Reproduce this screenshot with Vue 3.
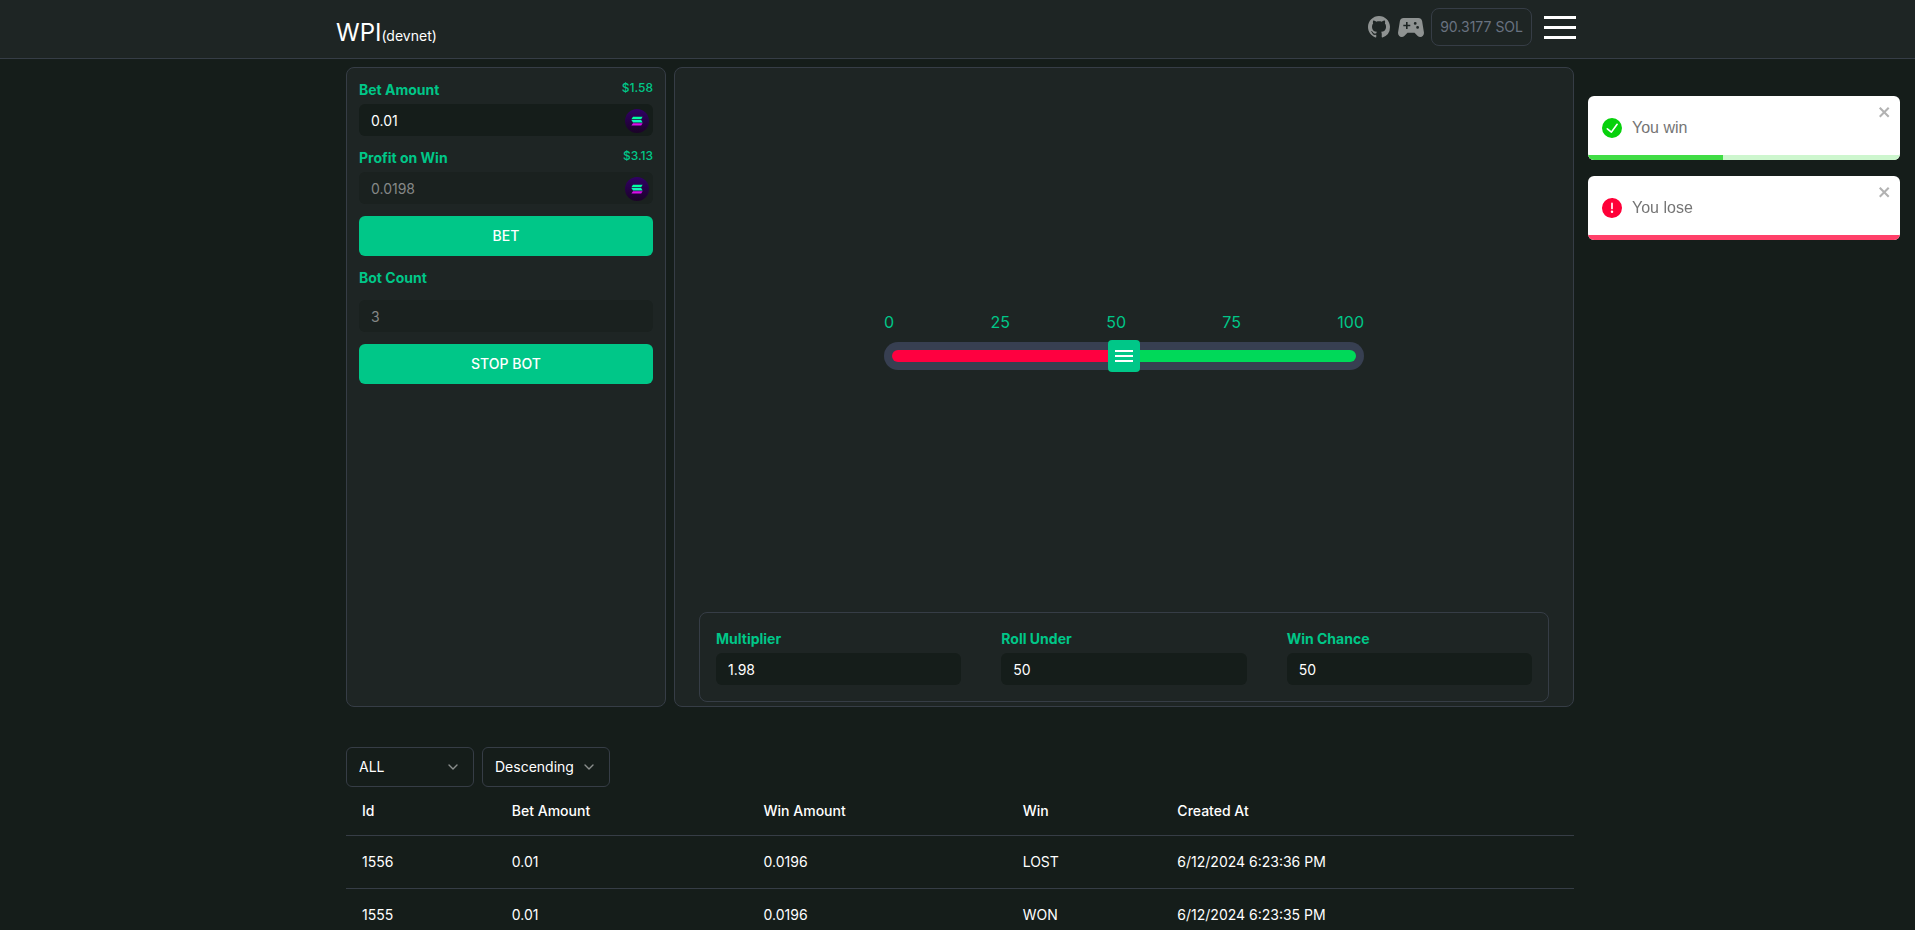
<script setup>
import { ref } from 'vue'

const bet = ref('0.01')
const profit = ref('0.0198')
const bots = ref('3')
const roll = ref(50)
const stats = ref([
  { id: 'multiplier', label: 'Multiplier', value: '1.98' },
  { id: 'roll-under', label: 'Roll Under', value: '50' },
  { id: 'win-chance', label: 'Win Chance', value: '50' },
])
const filter = ref('ALL')
const order = ref('Descending')
const ticks = [0, 25, 50, 75, 100]
const rows = [
  { id: 1556, bet: '0.01', win: '0.0196', result: 'LOST', at: '6/12/2024 6:23:36 PM' },
  { id: 1555, bet: '0.01', win: '0.0196', result: 'WON', at: '6/12/2024 6:23:35 PM' },
]
const toasts = ref([
  { kind: 'success', text: 'You win', progress: 43.3 },
  { kind: 'error', text: 'You lose', progress: 100 },
])
function dismiss(t) {
  toasts.value = toasts.value.filter((x) => x !== t)
}
</script>

<template>
  <div class="page">
    <svg class="defs" aria-hidden="true">
      <defs>
        <linearGradient id="coin-bg" x1="0" y1="0" x2="0" y2="1">
          <stop offset="0" stop-color="#310065" />
          <stop offset="1" stop-color="#1b0327" />
        </linearGradient>
        <symbol id="coin" viewBox="0 0 24 24">
          <circle cx="12" cy="12" r="12" fill="url(#coin-bg)" />
          <path d="M8 7.8h9.600l-1.400 2.400H6.400z" fill="#00ffa3" />
          <path d="M6.400 11h9.800l1.400 2.400H8z" fill="#0ff5b5" />
          <path d="M8 14.200h9.600l-1.400 2.400H6.400z" fill="#d80fe8" />
        </symbol>
      </defs>
    </svg>

    <header class="topbar">
      <div class="topbar-inner">
        <a class="brand" href="#"><span class="brand-name">WPI</span><span class="brand-net">(devnet)</span></a>
        <nav class="actions">
          <a class="icon-link" href="#" aria-label="GitHub">
            <svg class="github" viewBox="0 0 16 16" aria-hidden="true">
              <path fill="currentColor" d="M8 0C3.58 0 0 3.58 0 8c0 3.54 2.29 6.53 5.47 7.59.4.07.55-.17.55-.38 0-.19-.01-.82-.01-1.49-2.01.37-2.53-.49-2.69-.94-.09-.23-.48-.94-.82-1.13-.28-.15-.68-.52-.01-.53.63-.01 1.08.58 1.23.82.72 1.21 1.87.87 2.33.66.07-.52.28-.87.51-1.07-1.78-.2-3.64-.89-3.64-3.95 0-.87.31-1.59.82-2.15-.08-.2-.36-1.02.08-2.12 0 0 .67-.21 2.2.82.64-.18 1.32-.27 2-.27s1.36.09 2 .27c1.53-1.04 2.2-.82 2.2-.82.44 1.1.16 1.92.08 2.12.51.56.82 1.27.82 2.15 0 3.07-1.87 3.75-3.65 3.95.29.25.54.73.54 1.48 0 1.07-.01 1.93-.01 2.2 0 .21.15.46.55.38A8.01 8.01 0 0 0 16 8c0-4.42-3.58-8-8-8z" />
            </svg>
          </a>
          <a class="icon-link" href="#" aria-label="Games">
            <svg class="gamepad" viewBox="0 0 26 19" aria-hidden="true">
              <path fill="currentColor" fill-rule="evenodd" d="M5.6 0h14.8c1.9 0 3.3 1.1 3.7 2.9l1.8 11.3c.4 2.6-1.2 4.8-3.600 4.800-1.100 0-1.900-.4-2.600-1.100l-3.200-3.100H9.500l-3.200 3.100C5.600 18.600 4.800 19 3.700 19 1.300 19-.3 16.800.1 14.200L1.900 2.900C2.300 1.100 3.700 0 5.600 0zM8 4v2.700H5.300v1.600H8V11h1.600V8.300h2.700V6.700H9.600V4zM17.200 4a1.400 1.400 0 1 0 0 2.800 1.400 1.400 0 0 0 0-2.800zM19.600 8a1.400 1.400 0 1 0 0 2.800 1.400 1.400 0 0 0 0-2.800z" />
            </svg>
          </a>
          <button class="balance" type="button">90.3177 SOL</button>
          <button class="burger" type="button" aria-label="Menu"><i></i><i></i><i></i></button>
        </nav>
      </div>
    </header>

    <main class="content">
      <div class="game">
        <section class="panel controls">
          <div class="field">
            <div class="field-head"><label for="bet">Bet Amount</label><span class="usd">$1.58</span></div>
            <div class="coin-input">
              <input id="bet" v-model="bet" type="text" />
              <svg class="coin" aria-hidden="true"><use href="#coin" /></svg>
            </div>
          </div>
          <div class="field">
            <div class="field-head"><label for="profit">Profit on Win</label><span class="usd">$3.13</span></div>
            <div class="coin-input">
              <input id="profit" v-model="profit" type="text" disabled />
              <svg class="coin" aria-hidden="true"><use href="#coin" /></svg>
            </div>
          </div>
          <button class="primary" type="button">BET</button>
          <label for="bots">Bot Count</label>
          <input id="bots" v-model="bots" type="text" disabled />
          <button class="primary" type="button">STOP BOT</button>
        </section>

        <section class="panel board">
          <div class="stage">
            <div class="slider">
              <div class="ticks"><span v-for="t in ticks" :key="t">{{ t }}</span></div>
              <div class="rail">
                <div class="lose" :style="{ width: roll + '%' }"></div>
                <div class="win"></div>
                <input v-model="roll" class="range" type="range" min="0" max="100" aria-label="Roll under" />
              </div>
            </div>
          </div>
          <div class="stats">
            <div v-for="s in stats" :key="s.id" class="field">
              <label :for="s.id">{{ s.label }}</label>
              <input :id="s.id" v-model="s.value" type="text" />
            </div>
          </div>
        </section>
      </div>

      <section class="history">
        <div class="filters">
          <div class="picker">
            <select v-model="filter" aria-label="Result">
              <option>ALL</option>
              <option>WON</option>
              <option>LOST</option>
            </select>
            <svg class="chevron" viewBox="0 0 16 16" aria-hidden="true"><path d="M4 6l4 4 4-4" /></svg>
          </div>
          <div class="picker">
            <select v-model="order" aria-label="Order">
              <option>Descending</option>
              <option>Ascending</option>
            </select>
            <svg class="chevron" viewBox="0 0 16 16" aria-hidden="true"><path d="M4 6l4 4 4-4" /></svg>
          </div>
        </div>
        <table>
          <thead>
            <tr>
              <th class="c-id">Id</th>
              <th class="c-bet">Bet Amount</th>
              <th class="c-amount">Win Amount</th>
              <th class="c-win">Win</th>
              <th>Created At</th>
            </tr>
          </thead>
          <tbody>
            <tr v-for="r in rows" :key="r.id">
              <td>{{ r.id }}</td>
              <td>{{ r.bet }}</td>
              <td>{{ r.win }}</td>
              <td>{{ r.result }}</td>
              <td>{{ r.at }}</td>
            </tr>
          </tbody>
        </table>
      </section>
    </main>

    <aside class="toasts">
      <div v-for="t in toasts" :key="t.kind" class="toast" :class="t.kind" role="alert">
        <svg class="toast-icon" viewBox="0 0 24 24" aria-hidden="true">
          <path v-if="t.kind === 'success'" fill="currentColor" d="M12 0a12 12 0 1012 12A12.014 12.014 0 0012 0zm6.927 8.200l-6.845 9.289a1.011 1.011 0 01-1.430.188l-4.888-3.908a1 1 0 111.250-1.562l4.076 3.261 6.227-8.451a1 1 0 111.610 1.183z" />
          <path v-else fill="currentColor" d="M11.983 0a12.206 12.206 0 00-8.510 3.653A11.800 11.800 0 000 12.207 11.779 11.779 0 0011.800 24h.214A12.111 12.111 0 0024 11.791 11.766 11.766 0 0011.983 0zM10.500 16.542a1.476 1.476 0 011.449-1.530h.027a1.527 1.527 0 011.523 1.470 1.475 1.475 0 01-1.449 1.530h-.027a1.529 1.529 0 01-1.523-1.470zM11 12.500v-6a1 1 0 012 0v6a1 1 0 11-2 0z" />
        </svg>
        <span>{{ t.text }}</span>
        <button class="close" type="button" aria-label="Close" @click="dismiss(t)">
          <svg viewBox="0 0 14 16" aria-hidden="true">
            <path fill="currentColor" fill-rule="evenodd" d="M7.710 8.230l3.750 3.750-1.480 1.480-3.750-3.750-3.750 3.750L1 11.980l3.750-3.750L1 4.480 2.480 3l3.750 3.750L9.980 3l1.480 1.480-3.750 3.750z" />
          </svg>
        </button>
        <div class="progress"><div class="bar" :style="{ width: t.progress + '%' }"></div></div>
      </div>
    </aside>
  </div>
</template>

<style>
body {
  margin: 0;
  background: #151d1a;
}
</style>

<style scoped>
* {
  box-sizing: border-box;
}
.page {
  height: 100vh;
  overflow-y: auto;
  scrollbar-width: none;
  background: #151d1a;
  color: #fff;
  font: 400 14px/20px Inter, 'Noto Sans', sans-serif;
}
.defs {
  position: absolute;
  width: 0;
  height: 0;
}
button,
input,
select {
  font: inherit;
  color: inherit;
  margin: 0;
}
button {
  cursor: pointer;
}
.topbar {
  background: #1e2524;
  border-bottom: 1px solid #363d46;
}
.topbar-inner {
  display: flex;
  justify-content: space-between;
  align-items: flex-start;
  width: 100%;
  max-width: 1243px;
  height: 58px;
  margin: 0 auto;
  padding: 8px 3px 0 0;
}
.brand {
  display: flex;
  align-items: baseline;
  padding-top: 9px;
  color: #fff;
  text-decoration: none;
}
.brand-name {
  font-size: 24px;
  line-height: 32px;
}
.actions {
  display: flex;
  align-items: center;
  height: 38px;
}
.icon-link {
  display: flex;
  color: #8f9392;
}
.github {
  width: 22px;
  height: 22px;
}
.gamepad {
  width: 26px;
  height: 19px;
  margin: 0 7px 0 8px;
}
.balance {
  height: 38px;
  padding: 0 8px;
  background: none;
  border: 1px solid #363d46;
  border-radius: 8px;
  color: #697280;
}
.burger {
  display: flex;
  flex-direction: column;
  gap: 7px;
  width: 32px;
  margin-left: 12px;
  padding: 0;
  background: none;
  border: 0;
}
.burger i {
  height: 3px;
  background: #fff;
}
.content {
  max-width: 1233px;
  margin: 0 auto;
  padding: 8px 0 0 5px;
}
.game {
  display: grid;
  grid-template-columns: 320px 1fr;
  gap: 8px;
  min-height: 640px;
}
.panel {
  display: flex;
  flex-direction: column;
  background: #1e2524;
  border: 1px solid #363d46;
  border-radius: 8px;
}
.controls {
  gap: 12px;
  padding: 12px;
}
.field {
  display: flex;
  flex-direction: column;
  gap: 4px;
}
.field-head {
  display: flex;
  justify-content: space-between;
  align-items: flex-start;
}
label {
  color: #00c788;
  font-weight: 700;
}
.usd {
  color: #00c788;
  font-size: 12px;
  font-weight: 500;
  line-height: 16px;
}
input[type='text'] {
  width: 100%;
  height: 32px;
  padding: 0 12px;
  background: #151d1a;
  border: 0;
  border-radius: 6px;
}
input[type='text']:disabled {
  background: #1a211f;
  color: #858887;
}
.coin-input {
  position: relative;
  display: flex;
}
.coin {
  position: absolute;
  top: 5px;
  right: 4px;
  width: 24px;
  height: 24px;
}
.primary {
  height: 40px;
  background: #00c788;
  border: 0;
  border-radius: 6px;
  font-weight: 500;
}
.board {
  padding: 0 24px 4px;
}
.stage {
  flex: 1;
  display: flex;
  align-items: center;
  justify-content: center;
}
.slider {
  width: 480px;
}
.ticks {
  display: flex;
  justify-content: space-between;
  margin-bottom: 8px;
  color: #00c788;
  font-size: 16px;
  line-height: 24px;
}
.rail {
  position: relative;
  display: flex;
  height: 28px;
  padding: 8px;
  background: #373f51;
  border-radius: 14px;
}
.lose {
  background: #ff0040;
  border-radius: 6px 0 0 6px;
}
.win {
  flex: 1;
  background: #00d959;
  border-radius: 0 6px 6px 0;
}
.range {
  position: absolute;
  inset: -2px 0;
  width: 100%;
  height: 32px;
  margin: 0;
  appearance: none;
  background: none;
}
.range::-webkit-slider-thumb {
  appearance: none;
  width: 32px;
  height: 32px;
  border-radius: 4px;
  background:
    linear-gradient(#fff, #fff) center 10px / 18px 2px no-repeat,
    linear-gradient(#fff, #fff) center 15px / 18px 2px no-repeat,
    linear-gradient(#fff, #fff) center 20px / 18px 2px no-repeat,
    #00c788;
}
.stats {
  display: grid;
  grid-template-columns: repeat(3, 1fr);
  gap: 40px;
  padding: 16px;
  border: 1px solid #363d46;
  border-radius: 8px;
}
.history {
  padding-top: 40px;
}
.filters {
  display: flex;
  gap: 8px;
}
.picker {
  position: relative;
  width: 128px;
}
.picker select {
  width: 100%;
  height: 40px;
  padding: 0 12px;
  appearance: none;
  background: #151d1a;
  border: 1px solid #363d46;
  border-radius: 6px;
}
.chevron {
  position: absolute;
  top: 12px;
  right: 13px;
  width: 16px;
  height: 16px;
  pointer-events: none;
  fill: none;
  stroke: #8a8e8d;
  stroke-width: 1.4;
  stroke-linecap: round;
  stroke-linejoin: round;
}
table {
  width: 100%;
  table-layout: fixed;
  border-collapse: separate;
  border-spacing: 0;
}
th,
td {
  padding: 16px;
  border-bottom: 1px solid #363d46;
  text-align: left;
}
th {
  padding: 14px 16px;
  font-weight: 500;
}
.c-id {
  width: 12.2%;
}
.c-bet {
  width: 20.5%;
}
.c-amount {
  width: 21.1%;
}
.c-win {
  width: 12.6%;
}
.toasts {
  position: fixed;
  top: 96px;
  right: 15px;
  display: flex;
  flex-direction: column;
  gap: 16px;
  width: 312px;
}
.toast {
  position: relative;
  display: flex;
  align-items: center;
  gap: 10px;
  height: 64px;
  padding: 0 14px;
  overflow: hidden;
  background: #fff;
  border-radius: 6px;
  color: #757575;
  font: 16px/20px 'Liberation Sans', Arial, sans-serif;
}
.toast-icon {
  width: 20px;
  height: 20px;
}
.success .toast-icon {
  color: #07d10c;
}
.error .toast-icon {
  color: #ff0038;
}
.close {
  position: absolute;
  top: 8px;
  right: 8px;
  display: flex;
  padding: 0;
  background: none;
  border: 0;
  color: #b2b2b2;
}
.close svg {
  width: 14px;
  height: 16px;
}
.progress {
  position: absolute;
  inset: auto 0 0;
  height: 5px;
}
.bar {
  height: 100%;
}
.success .progress {
  background: #cdf6ce;
}
.success .bar {
  background: #40dc45;
}
.error .bar {
  background: #ff4069;
}
</style>
